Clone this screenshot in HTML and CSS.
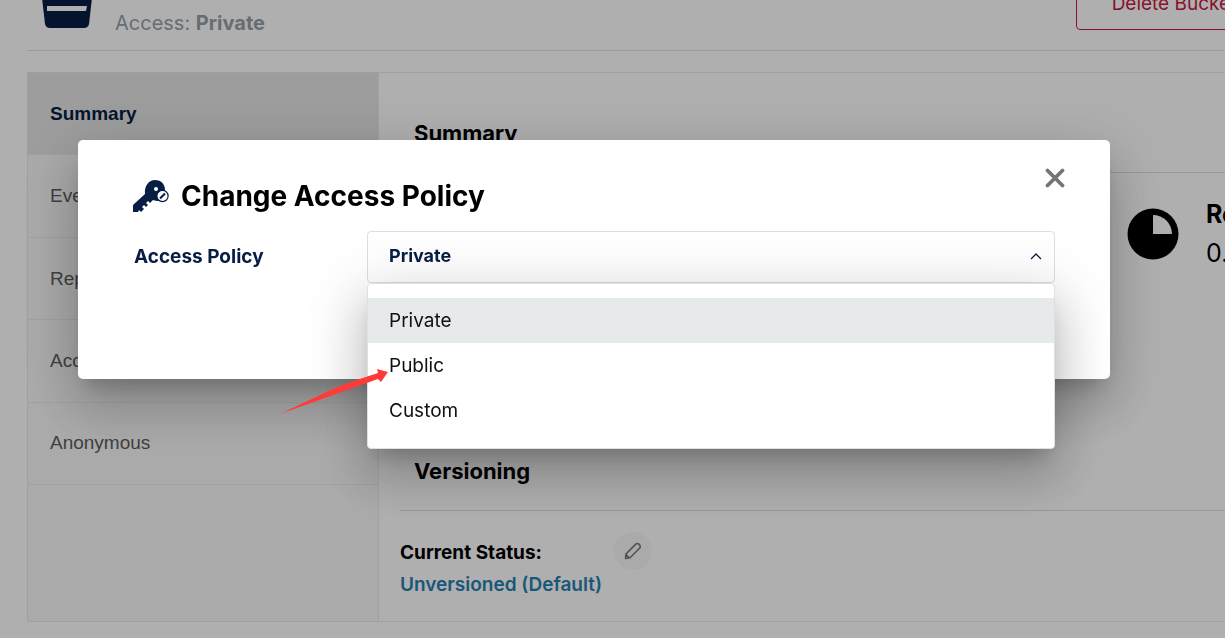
FILE: index.html
```html
<!DOCTYPE html>
<html lang="en">
<head>
<meta charset="utf-8">
<title>Bucket Summary</title>
<link rel="stylesheet" href="styles.css">
</head>
<body>
<main class="page">
  <header class="page-header">
    <svg class="bucket-icon" viewBox="0 0 56 56" aria-hidden="true"><path d="M0 0H56L50 52Q49 56 45 56H11Q7 56 6 52Z" fill="#071d43"/><path d="M8 34H48L47 39H8Z" fill="#fff"/></svg>
    <p class="access">Access: <strong>Private</strong></p>
    <button class="delete-button" type="button">Delete Bucket</button>
  </header>
  <section class="panel">
    <nav class="tabs">
      <div class="tab-list">
        <a class="tab tab-active" href="#summary">Summary</a>
        <a class="tab" href="#events">Events</a>
        <a class="tab" href="#replication">Replication</a>
        <a class="tab" href="#access">Access</a>
        <a class="tab" href="#anonymous">Anonymous</a>
      </div>
    </nav>
    <div class="content">
      <h2 class="section-title" id="summary">Summary</h2>
      <div class="usage-row">
        <svg class="usage-icon" viewBox="0 0 52 52" aria-hidden="true"><circle cx="26" cy="26" r="25.5"/><path d="M26 7A19 19 0 0 1 45 26H26Z" fill="#fff"/></svg>
        <div class="usage-text"><strong>Reported Usage:</strong><span>0.0B</span></div>
      </div>
      <h2 class="section-title">Versioning</h2>
      <div class="status-row">
        <div class="status">
          <strong>Current Status:</strong>
          <a class="status-link" href="#versioning">Unversioned (Default)</a>
        </div>
        <button class="edit-button" type="button" aria-label="Edit versioning">
          <svg viewBox="0 0 18 18" aria-hidden="true"><path d="M1.500 16.500L2 12L11.800 2.100Q13.400.8 15.200 2.400Q17 4.300 15.800 6L6 15.800ZM2 12.500L5.500 16" fill="none" stroke="#777" stroke-width="1.600" stroke-linejoin="round"/></svg>
        </button>
      </div>
    </div>
  </section>
</main>
<div class="overlay">
  <div class="dialog" role="dialog" aria-labelledby="dialog-title">
    <div class="dialog-header">
      <svg class="key-icon" viewBox="0 0 36 32" aria-hidden="true"><path d="M0 32V25L12 14C11 6 16 0 22 0C28 0 32 4 32 10L31 18C29 21 25 22 20 20L17 23L15 21L13 23L15 25L13 27L11 25L9 27L11 29L8 32L6 30L5 32Z" fill="#071d43"/><circle cx="23" cy="9" r="2" fill="#fff"/><circle cx="29.500" cy="16" r="5.600" fill="#fff" stroke="#071d43" stroke-width="1.200"/><path d="M27 18.500L32 13.500" stroke="#071d43" stroke-width="2.200"/></svg>
      <h1 class="dialog-title" id="dialog-title">Change Access Policy</h1>
      <button class="close-button" type="button" aria-label="Close"><svg viewBox="0 0 20 20" aria-hidden="true"><path d="M2.500 2.500L17.500 17.500M17.500 2.500L2.500 17.500" stroke="#757575" stroke-width="3.800" stroke-linecap="round"/></svg></button>
    </div>
    <div class="field">
      <label class="field-label" for="policy">Access Policy</label>
      <div class="select-wrap">
        <select class="select" id="policy"><option>Private</option><option>Public</option><option>Custom</option></select>
        <svg class="chevron" viewBox="0 0 12 8" aria-hidden="true"><path d="M1 7L6 2L11 7" fill="none" stroke="#071d43" stroke-width="1.300"/></svg>
        <ul class="menu" role="listbox">
          <li class="option option-selected" role="option" aria-selected="true">Private</li>
          <li class="option" role="option">Public
            <svg class="arrow" viewBox="0 0 108 46" aria-hidden="true"><path d="M0 45L98 10L101 13L108 3L97 0L98 4Q60 16 40 26Z" fill="#fe3b38"/></svg>
          </li>
          <li class="option" role="option">Custom</li>
        </ul>
      </div>
    </div>
  </div>
</div>
</body>
</html>
```
FILE: styles.css
```css
* { box-sizing: border-box; }
body { margin: 0; height: 100vh; overflow: hidden; background: #fff; color: #000; font-family: Inter, "Liberation Sans", sans-serif; }
button { font: inherit; padding: 0; cursor: pointer; }
a { text-decoration: none; }
h1, h2, p, ul { margin: 0; padding: 0; }
svg { display: block; }

.page { margin: -30px -60px 0 27px; }
.page-header { display: flex; align-items: flex-end; height: 81px; padding: 0 13px 20px 12px; border-bottom: 1px solid #e2e2e2; }
.bucket-icon { width: 56px; height: 56px; margin-bottom: 2px; }
.access { margin: 0 0 -5px 20px; font-size: 20px; line-height: 24px; color: #969fa8; }
.delete-button { width: 196px; height: 52px; margin-left: auto; padding-bottom: 2px; background: transparent; border: 1px solid #c51b3f; border-radius: 4px; color: #c51b3f; font-size: 19px; }

.panel { display: flex; min-height: 549px; margin-top: 21px; border: 1px solid #eaeaea; }
.tabs { width: 351px; flex: none; background: #f8f8f8; border-right: 1px solid #eaeaea; }
.tab-list { display: flex; flex-direction: column; height: 412px; }
.tab { flex: 1; display: flex; align-items: center; padding-left: 22px; border-bottom: 1px solid #eaeaea; color: #5c5c5c; font-family: "Liberation Sans", Arial, sans-serif; font-size: 19px; }
.tab-active { background: #e5e5e5; color: #071d43; font-weight: 700; }

.content { flex: 1; padding: 21px 0 20px 21px; }
.section-title { height: 79px; padding: 24px 14px 0; border-bottom: 1px solid #dedede; font-size: 22px; line-height: 30px; }
.usage-row { display: flex; align-items: flex-start; justify-content: flex-end; gap: 27px; height: 259px; padding: 35px 0 0; }
.usage-icon { width: 52px; height: 52px; }
.usage-text { display: flex; flex-direction: column; width: 78px; margin-top: -13px; font-size: 25px; line-height: 39px; white-space: nowrap; }
.status-row { display: flex; gap: 14px; padding-top: 21px; }
.status { display: flex; flex-direction: column; width: 200px; padding-top: 5px; font-size: 19px; line-height: 32px; white-space: nowrap; }
.status-link { color: #2781b0; font-weight: 600; }
.edit-button { display: grid; place-items: center; width: 38px; height: 38px; border: 0; border-radius: 50%; background: #f8f8f8; }
.edit-button svg { width: 18px; height: 18px; }

.overlay { position: fixed; inset: 0; padding: 140px 115px 0 78px; background: rgba(0, 0, 0, .314); }
.dialog { min-height: 239px; padding: 28px 55px 24px; background: #fff; border-radius: 5px; }
.dialog, .menu { box-shadow: 0 14px 19px -9px rgba(0, 0, 0, .2), 0 30px 48px 4px rgba(0, 0, 0, .14), 0 11px 58px 10px rgba(0, 0, 0, .12); }
.dialog-header { display: flex; align-items: flex-start; height: 63px; margin-right: -10px; }
.key-icon { width: 36px; height: 32px; margin-top: 12px; }
.dialog-title { margin: 10px auto 0 12px; font-size: 28px; line-height: 36px; font-weight: 700; }
.close-button { display: grid; place-items: center; width: 20px; height: 20px; border: 0; background: transparent; }
.close-button svg { width: 20px; height: 20px; }
.field { display: flex; }
.field-label { width: 234px; flex: none; padding-left: 1px; font-size: 19px; line-height: 52px; font-weight: 700; color: #071d43; }
.select-wrap { position: relative; flex: 1; }
.select { appearance: none; display: block; width: 100%; height: 52px; padding: 0 21px 3px; background: #fff; border: 1px solid #dedede; border-radius: 4px; color: #071d43; font: 700 18px Inter, sans-serif; }
.chevron { position: absolute; right: 13px; top: 21px; width: 12px; height: 8px; }
.menu { position: absolute; top: 52px; left: 0; right: 0; padding: 14px 0 15px; background: #fff; border: 1px solid #e0e0e0; border-radius: 4px; list-style: none; }
.option { position: relative; padding: 0 21px; font-size: 19px; line-height: 45px; color: #111; }
.option-selected { background: #e6eaeb; }
.arrow { position: absolute; left: -88px; top: 26px; width: 108px; height: 46px; }
```
